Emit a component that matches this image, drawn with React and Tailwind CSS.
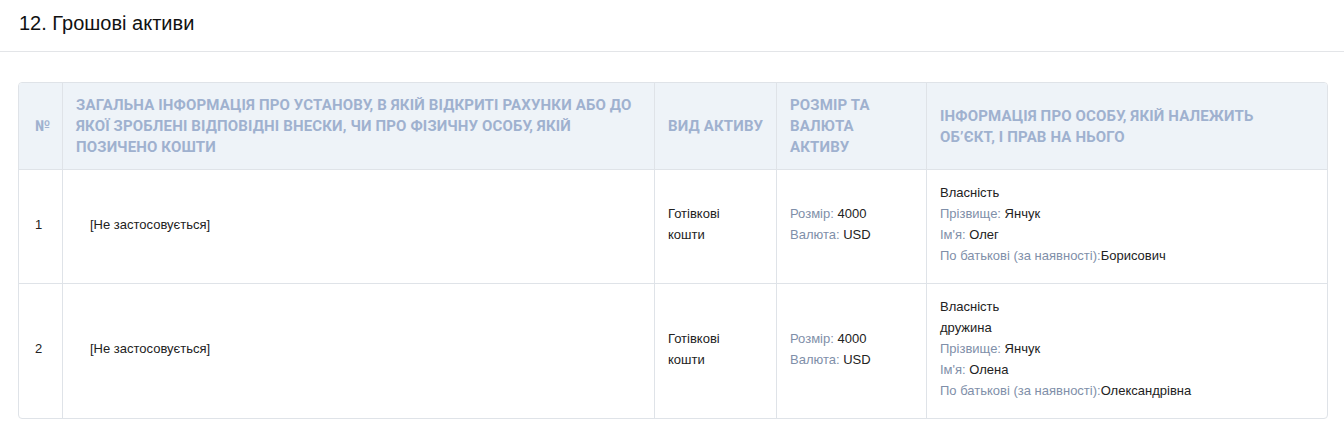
import React from "react";

const th = "px-[13px] pt-3 pb-[11px] flex items-center font-['Roboto',sans-serif] font-bold text-[15px] leading-[21px] tracking-[0.15px] uppercase text-[#9fb1cf]";
const td = "px-[13px] pt-3 pb-[17px] flex flex-col justify-center text-[13px] leading-[21px] text-[#222]";

function Lbl({ k, v, tight }) {
  return (
    <div>
      <span className="text-[#7f8fa9]">{k}{tight ? "" : " "}</span>
      {v}
    </div>
  );
}

function Row({ n, owner }) {
  return (
    <>
      <div className={`${td} border-t border-[#dfe3e8] pl-4`}>{n}</div>
      <div className={`${td} border-t border-l border-[#dfe3e8] pl-[27px]`}>[Не застосовується]</div>
      <div className={`${td} border-t border-l border-[#dfe3e8]`}>
        <div>Готівкові</div>
        <div>кошти</div>
      </div>
      <div className={`${td} border-t border-l border-[#dfe3e8]`}>
        <Lbl k="Розмір:" v="4000" />
        <Lbl k="Валюта:" v="USD" />
      </div>
      <div className={`${td} border-t border-l border-[#dfe3e8]`}>
        {owner}
      </div>
    </>
  );
}

export default function App() {
  return (
    <div className="bg-white min-h-[434px] font-['Liberation_Sans',Arial,sans-serif] text-[#222]">
      <div className="h-[52px] border-b border-[#e3e5e8] flex items-center px-[19px]">
        <h2 className="text-[20px] leading-none text-[#111] pb-[6px]">12. Грошові активи</h2>
      </div>
      <div className="pl-[18px] pr-4 pt-[30px]">
        <div className="border border-[#dfe3e8] rounded-[4px] overflow-hidden grid grid-cols-[43px_592px_122px_150px_1fr]">
          <div className={`${th} bg-[#eef3f8] pl-4`}>№</div>
          <div className={`${th} bg-[#eef3f8] border-l border-[#dfe3e8]`}>
            Загальна інформація про установу, в якій відкриті рахунки або до якої зроблені відповідні внески, чи про фізичну особу, якій позичено кошти
          </div>
          <div className={`${th} bg-[#eef3f8] border-l border-[#dfe3e8] pr-[4px] whitespace-nowrap`}>Вид активу</div>
          <div className={`${th} bg-[#eef3f8] border-l border-[#dfe3e8]`}>Розмір та валюта активу</div>
          <div className={`${th} bg-[#eef3f8] border-l border-[#dfe3e8] pr-[60px]`}>
            Інформація про особу, якій належить об’єкт, і прав на нього
          </div>
          <Row
            n="1"
            owner={
              <>
                <div>Власність</div>
                <Lbl k="Прізвище:" v="Янчук" />
                <Lbl k="Ім'я:" v="Олег" />
                <Lbl k="По батькові (за наявності):" v="Борисович" tight />
              </>
            }
          />
          <Row
            n="2"
            owner={
              <>
                <div>Власність</div>
                <div>дружина</div>
                <Lbl k="Прізвище:" v="Янчук" />
                <Lbl k="Ім'я:" v="Олена" />
                <Lbl k="По батькові (за наявності):" v="Олександрівна" tight />
              </>
            }
          />
        </div>
      </div>
    </div>
  );
}
